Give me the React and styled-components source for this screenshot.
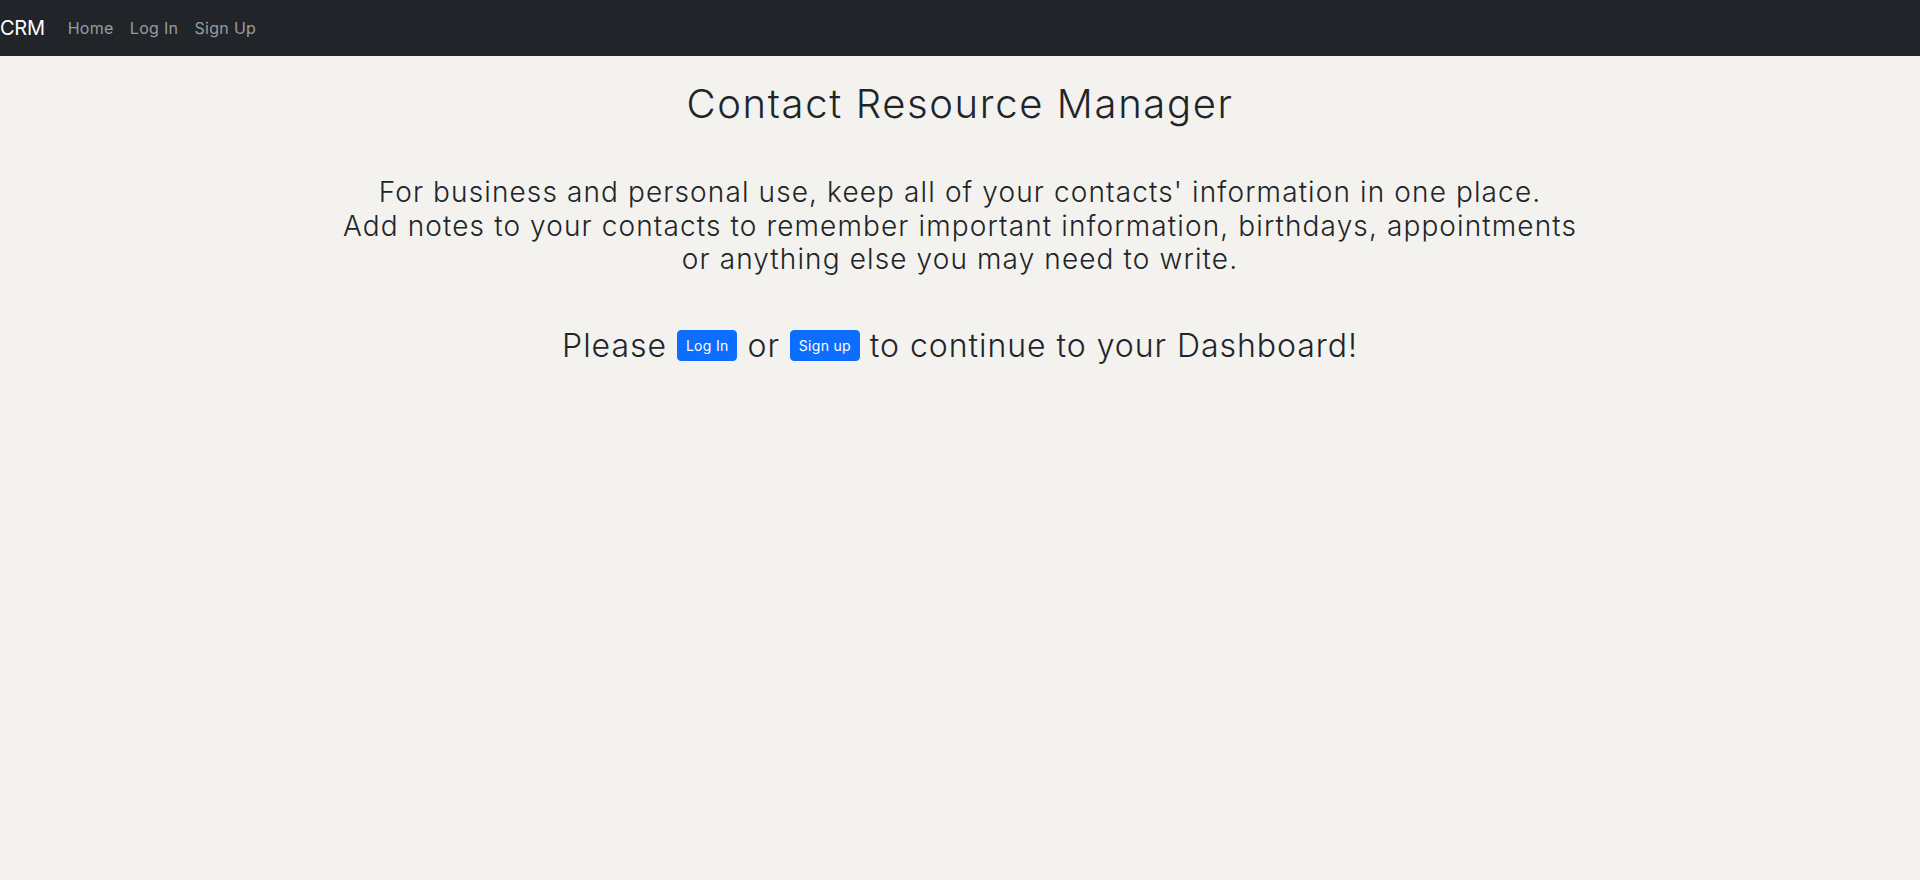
import React from 'react';
import styled, { createGlobalStyle } from 'styled-components';

const GlobalStyle = createGlobalStyle`
    html, body {
        margin: 0;
        padding: 0;
        background: #f3f2ee;
        font-family: Inter, "Open Sans", sans-serif;
        font-weight: 300;
        color: #212529;
    }
    body {
        min-height: 880px;
    }
`;

const Navbar = styled.nav`
        display: flex;
        align-items: center;
        height: 56px;
        background: #212529;
        box-sizing: border-box;
    `;

const Brand = styled.a`
        font-size: 20px;
        font-weight: 400;
        color: #fff;
        margin-right: 15px;
        text-decoration: none;
        letter-spacing: -0.3px;
    `;

const NavLink = styled.a`
        font-size: 16px;
        font-weight: 400;
        color: rgba(255, 255, 255, 0.55);
        padding: 8px;
        text-decoration: none;
        letter-spacing: 0.02em;
    `;

const Main = styled.main`
        display: flex;
        flex-direction: column;
        align-items: center;
        text-align: center;
    `;

const Title = styled.h1`
        font-size: 40px;
        font-weight: 300;
        line-height: 1.2;
        letter-spacing: 0.041em;
        margin: 24px 0 0;
    `;

const Intro = styled.p`
        font-size: 28px;
        font-weight: 300;
        line-height: 1.2;
        letter-spacing: 0.04em;
        margin: 48px 0 0;
    `;

const Cta = styled.h2`
        display: flex;
        align-items: center;
        gap: 10px;
        font-size: 32px;
        font-weight: 300;
        line-height: 1.2;
        letter-spacing: 0.03em;
        margin: 50px 0 0;
    `;

const Button = styled.button`
        font-family: inherit;
        font-size: 14px;
        font-weight: 400;
        letter-spacing: 0.02em;
        color: #fff;
        background: #0d6efd;
        border: 1px solid #0d6efd;
        border-radius: 4px;
        height: 31px;
        padding: 0 8px;
        cursor: pointer;
    `;

const App = () => {
    return (
        <>
            <GlobalStyle />
            <Navbar>
                <Brand href="#">CRM</Brand>
                <NavLink href="#">Home</NavLink>
                <NavLink href="#">Log In</NavLink>
                <NavLink href="#">Sign Up</NavLink>
            </Navbar>
            <Main>
                <Title>Contact Resource Manager</Title>
                <Intro>
                    For business and personal use, keep all of your contacts' information in one place.<br />
                    Add notes to your contacts to remember important information, birthdays, appointments<br />
                    or anything else you may need to write.
                </Intro>
                <Cta>
                    Please <Button>Log In</Button> or <Button>Sign up</Button> to continue to your Dashboard!
                </Cta>
            </Main>
        </>
    )
}

export default App
